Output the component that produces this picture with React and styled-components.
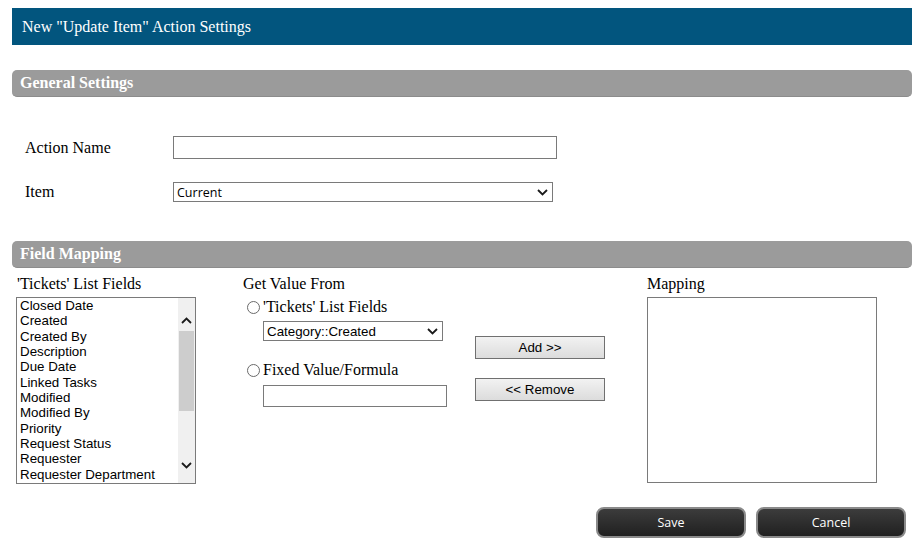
import React from "react";
import styled, { createGlobalStyle } from "styled-components";

const Global = createGlobalStyle`
  html, body { margin: 0; padding: 0; background: #fff; }
  body { font-family: "Liberation Serif", "Times New Roman", serif; color: #000; }
`;

const Page = styled.div`
  width: 900px;
  padding: 8px 10px 0 12px;
`;

const Header = styled.div`
  height: 37px;
  background: #02557e;
  color: #fff;
  font-size: 16px;
  display: flex;
  align-items: center;
  padding-left: 10px;
`;

const SectionBar = styled.div`
  margin-top: ${(p) => p.$top}px;
  height: 27px;
  box-sizing: border-box;
  background: #9b9b9b;
  border-bottom: 1px solid #8c8c8c;
  border-radius: 5px;
  color: #fff;
  font-weight: bold;
  font-size: 16px;
  display: flex;
  align-items: center;
  padding-left: 8px;
`;

const Form = styled.div`
  padding: 39px 0 39px 13px;
  display: flex;
  flex-direction: column;
  gap: 23px;
`;

const FormRow = styled.div`
  display: flex;
  align-items: center;
`;

const FormLabel = styled.div`
  width: 148px;
  font-size: 16px;
`;

const TextInput = styled.div`
  width: ${(p) => p.$w}px;
  height: ${(p) => p.$h}px;
  box-sizing: border-box;
  border: 1px solid #7a7a7a;
  background: #fff;
`;

const SelectBox = styled.div`
  width: ${(p) => p.$w}px;
  height: 20px;
  box-sizing: border-box;
  border: 1px solid #7a7a7a;
  background: #fff;
  display: flex;
  align-items: center;
  justify-content: space-between;
  padding: 0 4px 0 3px;
  font-family: ${(p) => (p.$ui ? '"Open Sans", "Noto Sans", sans-serif' : '"Liberation Sans", Arial, sans-serif')};
  font-size: ${(p) => (p.$ui ? 12.5 : 13.33)}px;
  color: #000;
`;

const Chevron = ({ up }) => (
  <svg width="11" height="7" viewBox="0 0 11 7">
    <path
      d={up ? "M1 6 L5.5 1.5 L10 6" : "M1 1 L5.5 5.5 L10 1"}
      fill="none"
      stroke="#1a1a1a"
      strokeWidth="1.8"
    />
  </svg>
);

const Columns = styled.div`
  display: flex;
  padding-top: 7px;
`;

const Col = styled.div`
  width: ${(p) => (p.$w ? `${p.$w}px` : "auto")};
  padding-left: ${(p) => p.$pl || 0}px;
  box-sizing: border-box;
  display: flex;
  flex-direction: column;
`;

const ColLabel = styled.div`
  font-size: 16px;
  line-height: 18px;
  padding-left: ${(p) => p.$pl || 0}px;
  margin-bottom: 4px;
`;

const ListBox = styled.div`
  width: 180px;
  height: 187px;
  box-sizing: border-box;
  border: 1px solid #7a7a7a;
  display: flex;
  overflow: hidden;
`;

const ListItems = styled.div`
  flex: 1;
  padding-left: 3px;
  font-family: "Liberation Sans", Arial, sans-serif;
  font-size: 13.33px;
  line-height: 15.33px;
  white-space: nowrap;
`;

const ScrollTrack = styled.div`
  width: 17px;
  flex: none;
  background: #f0f0f0;
  display: flex;
  flex-direction: column;
  align-items: center;
  padding-top: 19px;
`;

const Thumb = styled.div`
  width: 15px;
  height: 80px;
  background: #cdcdcd;
  margin-top: 7px;
`;

const ScrollDown = styled.div`
  margin-top: 44px;
`;

const RadioRow = styled.div`
  display: flex;
  align-items: center;
  margin-top: ${(p) => p.$mt}px;
  padding-left: 4px;
  height: 18px;
  font-size: 16px;
`;

const Radio = styled.span`
  width: 11px;
  height: 11px;
  border: 1px solid #6a6a6a;
  border-radius: 50%;
  background: #fff;
  margin-right: 3px;
  margin-top: 1px;
`;

const Indented = styled.div`
  margin-top: ${(p) => p.$mt}px;
  padding-left: 20px;
`;

const GreyButton = styled.div`
  width: 130px;
  height: 23px;
  box-sizing: border-box;
  margin-top: ${(p) => p.$mt}px;
  border: 1px solid #707070;
  background: linear-gradient(#f2f2f2, #dcdcdc);
  font-family: "Liberation Sans", Arial, sans-serif;
  font-size: 13.33px;
  display: flex;
  align-items: center;
  justify-content: center;
  color: #000;
`;

const MappingBox = styled.div`
  width: 230px;
  height: 186px;
  box-sizing: border-box;
  border: 1px solid #7a7a7a;
`;

const Footer = styled.div`
  display: flex;
  justify-content: flex-end;
  gap: 10px;
  margin-top: 23px;
  padding-right: 6px;
`;

const DarkButton = styled.div`
  width: 150px;
  height: 31px;
  box-sizing: border-box;
  border: 2px solid #8a8a8a;
  border-radius: 8px;
  background: linear-gradient(#3c3c3c, #202020);
  color: #fff;
  font-family: "Open Sans", "Noto Sans", sans-serif;
  font-size: 12.5px;
  display: flex;
  align-items: center;
  justify-content: center;
`;

const fields = [
  "Closed Date",
  "Created",
  "Created By",
  "Description",
  "Due Date",
  "Linked Tasks",
  "Modified",
  "Modified By",
  "Priority",
  "Request Status",
  "Requester",
  "Requester Department",
];

export default function App() {
  return (
    <>
      <Global />
      <Page>
        <Header>New "Update Item" Action Settings</Header>
        <SectionBar $top={25}>General Settings</SectionBar>
        <Form>
          <FormRow>
            <FormLabel>Action Name</FormLabel>
            <TextInput $w={384} $h={23} />
          </FormRow>
          <FormRow>
            <FormLabel>Item</FormLabel>
            <SelectBox $w={380} $ui>
              <span>Current</span>
              <Chevron />
            </SelectBox>
          </FormRow>
        </Form>
        <SectionBar $top={0}>Field Mapping</SectionBar>
        <Columns>
          <Col $w={231} $pl={4}>
            <ColLabel $pl={1}>'Tickets' List Fields</ColLabel>
            <ListBox>
              <ListItems>
                {fields.map((f) => (
                  <div key={f}>{f}</div>
                ))}
              </ListItems>
              <ScrollTrack>
                <Chevron up />
                <Thumb />
                <ScrollDown>
                  <Chevron />
                </ScrollDown>
              </ScrollTrack>
            </ListBox>
          </Col>
          <Col $w={232}>
            <ColLabel>Get Value From</ColLabel>
            <RadioRow $mt={1}>
              <Radio />
              'Tickets' List Fields
            </RadioRow>
            <Indented $mt={5}>
              <SelectBox $w={180}>
                <span>Category::Created</span>
                <Chevron />
              </SelectBox>
            </Indented>
            <RadioRow $mt={20}>
              <Radio />
              Fixed Value/Formula
            </RadioRow>
            <Indented $mt={6}>
              <TextInput $w={184} $h={22} />
            </Indented>
          </Col>
          <Col $w={172}>
            <GreyButton $mt={61}>Add &gt;&gt;</GreyButton>
            <GreyButton $mt={19}>&lt;&lt; Remove</GreyButton>
          </Col>
          <Col>
            <ColLabel>Mapping</ColLabel>
            <MappingBox />
          </Col>
        </Columns>
        <Footer>
          <DarkButton>Save</DarkButton>
          <DarkButton>Cancel</DarkButton>
        </Footer>
      </Page>
    </>
  );
}
